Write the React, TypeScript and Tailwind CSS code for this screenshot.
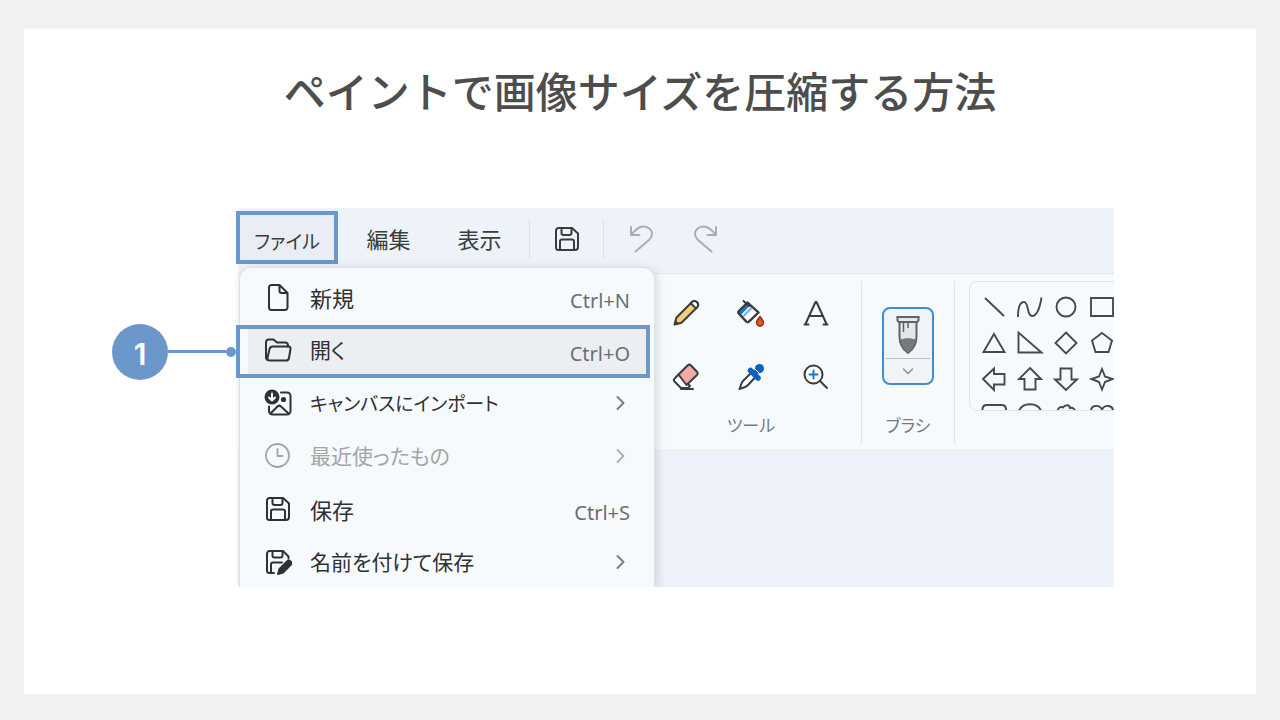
import React from 'react';
import clsx from 'clsx';

type IconProps = { className?: string };

const line = {
  fill: 'none',
  stroke: 'currentColor',
  strokeWidth: 2,
  strokeLinecap: 'round',
  strokeLinejoin: 'round',
} as const;

function SaveIcon({ className = 'size-7' }: IconProps) {
  return (
    <svg viewBox="0 0 28 28" className={className} {...line}>
      <path d="M5.500 3h13.500l6 5.500v13.500a3 3 0 0 1-3 3H5.500a2.500 2.500 0 0 1-2.500-2.500V5.500A2.500 2.500 0 0 1 5.500 3z" />
      <path d="M8.500 3v5a2 2 0 0 0 2 2h6a2 2 0 0 0 2-2V3M7 25v-8.500a2 2 0 0 1 2-2h10a2 2 0 0 1 2 2V25" />
    </svg>
  );
}

function FileIcon() {
  return (
    <svg viewBox="0 0 28 28" className="size-7" {...line}>
      <path d="M7.500 2h8l8 8v14.500a2.500 2.500 0 0 1-2.500 2.500H7.500A2.500 2.500 0 0 1 5 24.500v-20A2.500 2.500 0 0 1 7.500 2zM15.500 2v6a2 2 0 0 0 2 2h6" />
    </svg>
  );
}

function FolderIcon() {
  return (
    <svg viewBox="0 0 28 28" className="size-7" {...line}>
      <path d="M4 24a3 3 0 0 1-2-3V6.500a3 3 0 0 1 3-3h4.500l3.500 3h8a3 3 0 0 1 3 3v1" />
      <path d="M9 10.500h15.500a2 2 0 0 1 2 2.500l-1.500 9a3 3 0 0 1-3 2.500H5.500a2 2 0 0 1-2-2.500l2-9a3.500 3.500 0 0 1 3.500-2.500z" />
    </svg>
  );
}

function ImportIcon() {
  return (
    <svg viewBox="0 0 28 28" className="size-7" {...line}>
      <path d="M17 3.500h6a3.500 3.500 0 0 1 3.500 3.500v15a3.500 3.500 0 0 1-3.500 3.500H8.500A3.500 3.500 0 0 1 5 22v-4.500" />
      <path d="M7 24l6.500-6.500a2.500 2.500 0 0 1 3.500 0l7 6.500" />
      <circle cx="19.500" cy="10.500" r="1.600" fill="currentColor" />
      <circle cx="8" cy="8" r="7.500" fill="currentColor" stroke="none" />
      <path d="M8 4.500v7M5 8.500l3 3 3-3" stroke="#f7fafc" />
    </svg>
  );
}

function ClockIcon() {
  return (
    <svg viewBox="0 0 28 28" className="size-7" {...line} strokeWidth={1.8}>
      <circle cx="13.500" cy="13.500" r="11.500" />
      <path d="M13.500 7v7h5" />
    </svg>
  );
}

function SaveAsIcon() {
  return (
    <svg viewBox="0 0 28 28" className="size-7" {...line}>
      <path d="M10 25H5.500A2.500 2.500 0 0 1 3 22.500V5.500A2.500 2.500 0 0 1 5.500 3h13.500l5.500 5.500v2" />
      <path d="M8.500 3v4.500a2 2 0 0 0 2 2h6a2 2 0 0 0 2-2V3M7 25v-8.500a2 2 0 0 1 2-2h9" />
      <path d="M14 26l1.500-5 7.500-7.500a2.200 2.200 0 0 1 3.500 3.500L19 24.500z" fill="currentColor" />
    </svg>
  );
}

function ChevronRight() {
  return (
    <svg viewBox="0 0 20 20" className="size-5" {...line}>
      <path d="M7.500 4l6 6-6 6" />
    </svg>
  );
}

function UndoIcon({ className }: IconProps) {
  return (
    <svg viewBox="0 0 28 28" className={clsx('size-7', className)} {...line}>
      <path d="M3 2v8h8.500M3.500 9.500C7 5 10.500 1.500 15.500 1.500c5 0 8.500 3.500 8.500 7.500 0 2.500-1.200 4.200-3 6L7.500 26.500" />
    </svg>
  );
}

const tools = [
  {
    name: '鉛筆',
    icon: (
      <>
        <path d="M2.500 25.500l2-7L20 3a3.700 3.700 0 0 1 5.200 5.200L9.500 23.700z" fill="#f5cd78" />
        <path d="M20 3a3.700 3.700 0 0 1 5.200 5.200l-1.200 1.200L18.700 4.200z" fill="#fff" />
        <path d="M2.500 25.500l1-4 3 3z" fill="currentColor" strokeWidth="1" />
      </>
    ),
  },
  {
    name: '塗りつぶし',
    icon: (
      <>
        <path d="M10.500 3.500l11 10-9.500 9a2 2 0 0 1-2.800 0L2 14.800a2 2 0 0 1 0-2.800z" fill="#fff" />
        <path d="M9.500 4.500l3 2.500-8.500 9-2-2a1.500 1.500 0 0 1 0-2z" fill="#1976c9" stroke="none" />
        <path d="M13.500 8l2 1.800-9 9L5 17z" fill="#7db9ee" stroke="none" />
        <path d="M6.500 2l5.500 5M10.500 3.500l11 10-9.500 9a2 2 0 0 1-2.800 0L2 14.800a2 2 0 0 1 0-2.800z" />
        <path d="M23 17.500c2 2.600 3.500 4.500 3.500 6a3.500 3.500 0 0 1-7 0c0-1.500 1.500-3.400 3.500-6z" fill="#f0541e" stroke="#8a2c0d" strokeWidth="1.400" />
      </>
    ),
  },
  {
    name: 'テキスト',
    icon: <path d="M3.500 25L13.500 3h1l10 22M2.500 25.500h4M21.500 25.500h4M7.500 17h13" />,
  },
  {
    name: '消しゴム',
    icon: (
      <>
        <path d="M9 25L2.500 18.500a2 2 0 0 1 0-2.800l4-4.200L18 23l-2 2z" fill="#fff" />
        <path d="M6.500 11.500l9-9a2.500 2.500 0 0 1 3.500 0l6 6.200a2.500 2.500 0 0 1 0 3.300L14.500 22z" fill="#f7a9a8" />
        <path d="M9 26h12" />
      </>
    ),
  },
  {
    name: '色の選択',
    icon: (
      <>
        <path d="M14.500 9.500L6 18c-2 2-1.500 3.500-3.500 8 4.500-2 6-1.500 8-3.500l8-8.500z" fill="#fff" />
        <path d="M13.500 7.500l7.500 7.500M17.500 10.500l4.500-4.500" stroke="#0a62c0" strokeWidth="5.500" />
        <circle cx="22.500" cy="5.500" r="4.500" fill="#0a62c0" stroke="none" />
        <path d="M17.500 5.500l5 5" stroke="#f6fafd" strokeWidth="1" />
      </>
    ),
  },
  {
    name: '拡大鏡',
    icon: (
      <>
        <circle cx="11.500" cy="11.500" r="9" fill="#fff" />
        <path d="M18 18l7 7" />
        <path d="M11.500 7.500v8M7.500 11.500h8" stroke="#1976c9" />
      </>
    ),
  },
];

const shapes = [
  'M9 9l19 18',
  'M6 28c0-9 2-15 6-15 5 0 2.500 14 8 14s8-9 9.500-18.500',
  'M27.500 18a9.500 9.500 0 1 1-19 0a9.500 9.500 0 1 1 19 0z',
  'M7 9h22v18H7z',
  'M18 9l10.500 18h-21z',
  'M6.500 7.500v20h23z',
  'M18 7.500L28.500 18 18 28.500 7.500 18z',
  'M18 8l10 7.500-3.500 11.500h-13L8 15.500z',
  'M7 18L18 7.500V13h10.500v10.500H18V29z',
  'M18 7l11 11h-5.500v10.500h-11V18H7z',
  'M18 29L7 18.500h5.500V7.500h11v11H29z',
  'M18 8l3 7.500 7.500 2.500-7.500 3L18 28.500 15 21l-7.500-3 7.500-2.500z',
  'M6.500 15v-2.500q0-4.500 4.500-4.500h14.500q4.500 0 4.500 4.500V15',
  'M7 14c3-9 19-9 22 0',
  'M9.500 15c0-4 3-6 5.500-4.500 2.500-3.500 6.500-2.500 7 .5 3-1 5 1.500 5.500 4',
  'M7 14c0-6 8-7 11-1.500C21 7 29 8 29 14',
];

const menuItems = [
  { label: '新規', size: 'text-[22px]', icon: <FileIcon />, shortcut: 'Ctrl+N' },
  { label: '開く', size: 'text-[21px]', icon: <FolderIcon />, shortcut: 'Ctrl+O', step: 1 },
  { label: 'キャンバスにインポート', size: 'text-[19px]', icon: <ImportIcon /> },
  { label: '最近使ったもの', size: 'text-[21px]', icon: <ClockIcon />, disabled: true },
  { label: '保存', size: 'text-[22px]', icon: <SaveIcon />, shortcut: 'Ctrl+S' },
  { label: '名前を付けて保存', size: 'text-[21px]', icon: <SaveAsIcon /> },
];

function StepMarker({ step }: { step: number }) {
  return (
    <div className="pointer-events-none absolute inset-y-0 -left-1 right-1 border-4 border-[#6c97cb]">
      <div className="absolute right-full top-1/2 mr-1 -translate-y-1/2 flex items-center">
        <span className="flex size-14 items-center justify-center rounded-full bg-[#6c97cb] pt-1 text-[30px] leading-9 font-semibold text-white font-['Inter',sans-serif]">
          {step}
        </span>
        <span className="h-[3px] w-[58px] bg-[#6c97cb]" />
        <span className="size-2.5 rounded-full bg-[#6c97cb]" />
      </div>
    </div>
  );
}

function FileMenu() {
  return (
    <ul className="absolute left-px top-[59px] bottom-0 w-[416px] rounded-t-xl border border-b-0 border-[#dce1e6] bg-[#f7fafc] pt-1 shadow-[2px_2px_10px_rgba(60,70,90,0.18)]">
      {menuItems.map((item) => (
        <li key={item.label} className="relative px-2">
          <button
            disabled={item.disabled}
            className={clsx(
              'flex h-[53px] w-full items-center gap-[18px] px-4 pb-[3px] text-left',
              item.disabled ? 'text-[#a3a5a7]' : 'text-[#2f3133]',
              item.step && 'bg-[#eceff2]'
            )}
          >
            {item.icon}
            <span className={clsx('flex-1 whitespace-nowrap', item.size)}>{item.label}</span>
            {item.shortcut ? (
              <span className="pt-2 text-[20px] text-[#6b6e71] font-['Noto_Sans',sans-serif]">{item.shortcut}</span>
            ) : (
              <span className={item.disabled ? 'text-[#b0b2b4]' : 'text-[#7b7e81]'}>
                <ChevronRight />
              </span>
            )}
          </button>
          {item.step && <StepMarker step={item.step} />}
        </li>
      ))}
    </ul>
  );
}

function MenuBar() {
  return (
    <div className="flex h-[66px] items-center border-b border-[#e3e8ed] bg-[#edf3f8] pb-1 text-[22px] text-[#3a3c3e]">
      <button className="-ml-0.5 mb-0.5 h-[53px] w-[102px] border-4 border-[#6c97cb] bg-[#e8edf6] pt-2 text-[19px]">
        ファイル
      </button>
      <button className="ml-[5px] w-[91px]">編集</button>
      <button className="mr-1 w-[91px]">表示</button>
      <span className="h-10 w-px bg-[#dde2e8]" />
      <button aria-label="保存" className="flex w-[73px] justify-center">
        <SaveIcon />
      </button>
      <span className="mr-1.5 h-10 w-px bg-[#dde2e8]" />
      <button aria-label="元に戻す" className="flex w-[63px] justify-center text-[#a9adb1]">
        <UndoIcon />
      </button>
      <button aria-label="やり直し" className="flex w-[63px] justify-center text-[#a9adb1]">
        <UndoIcon className="-scale-x-100" />
      </button>
    </div>
  );
}

function Ribbon() {
  return (
    <div className="flex h-[177px] overflow-hidden border-b border-[#e6e9ee] bg-[#f6fafd] pt-[7px] pl-[415px] text-[17px] text-[#77797c]">
      <div className="w-[208px] shrink-0">
        <div className="grid grid-cols-3 pr-[13px]">
          {tools.map((tool) => (
            <button
              key={tool.name}
              aria-label={tool.name}
              className="flex h-16 items-center justify-center text-[#3a3c3e]"
            >
              <svg viewBox="0 0 28 28" className="size-7" {...line}>
                {tool.icon}
              </svg>
            </button>
          ))}
        </div>
        <p className="pr-3 text-center leading-8">ツール</p>
      </div>

      <div className="mb-1.5 w-[94px] shrink-0 border-x border-[#e2e6ea]">
        <div className="flex h-[130px] items-center justify-center">
          <button
            aria-label="ブラシ"
            className="flex h-[78px] w-[52px] flex-col rounded-lg border-2 border-[#3b8ed6] bg-[#f1f4f7] px-0.5"
          >
            <span className="flex h-[50px] w-full items-center justify-center border-b border-[#b9bdc1]">
              <svg viewBox="0 0 28 40" className="h-10 w-7" fill="none" stroke="#606366" strokeWidth="2">
                <path d="M3.500 3v3.500l2 2.500v13c0 8 4 14 8.500 17 4.500-3 8.500-9 8.500-17V9l2-2.500V3" fill="#e4e6e9" />
                <path d="M2.500 3h23M4 8h20" />
                <path d="M6 26c3-2.500 13-2.500 16 0-1.500 6-4.500 10-8 13-3.500-3-6.500-7-8-13z" fill="#77797c" stroke="none" />
                <path d="M9.500 9v9M14 9v5" strokeWidth="1.500" />
              </svg>
            </span>
            <span className="flex w-full flex-1 items-center justify-center">
              <svg viewBox="0 0 12 8" className="h-2 w-3" {...line} stroke="#8d9093" strokeWidth={1.5}>
                <path d="M1.500 2L6 6.500 10.500 2" />
              </svg>
            </span>
          </button>
        </div>
        <p className="text-center leading-7">ブラシ</p>
      </div>

      <div className="-mr-4 ml-3.5 h-[130px] min-w-0 flex-1 overflow-hidden rounded-lg border border-[#e0e4e8] pl-1.5 pt-[7px]">
        <div className="grid grid-cols-[repeat(4,36px)] text-[#47494c]">
          {shapes.map((d) => (
            <svg key={d} viewBox="0 0 36 36" className="size-9" fill="none" stroke="currentColor" strokeWidth="1.900">
              <path d={d} />
            </svg>
          ))}
        </div>
      </div>
    </div>
  );
}

export default function App() {
  return (
    <div className="flex min-h-screen bg-[#f1f1f1] px-6 pt-[29px] pb-[26px] font-['Noto_Sans_CJK_JP',sans-serif]">
      <main className="flex-1 bg-white pt-[29px]">
        <h1 className="text-center text-[42px] leading-[64px] font-medium text-[#4d4d4d]">
          ペイントで画像サイズを圧縮する方法
        </h1>

        <div className="mt-[86px] overflow-hidden pl-[214px] pr-[142px]">
          <div className="relative [font-feature-settings:'palt']">
            <MenuBar />
            <Ribbon />
            <div className="h-[136px] bg-[#eef2fa]" />
            <FileMenu />
          </div>
        </div>
      </main>
    </div>
  );
}
